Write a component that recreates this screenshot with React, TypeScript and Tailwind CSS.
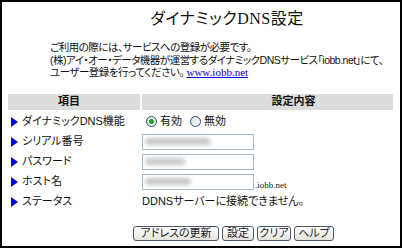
import React from "react";

const jp = "[font-family:'Liberation_Sans','Noto_Sans_CJK_JP',sans-serif] [font-feature-settings:'palt']";

const Arrow = () => (
  <svg width="7" height="10" viewBox="0 0 7 10" className="shrink-0">
    <path d="M0 0 L7 5 L0 10 Z" fill="#0000e0" />
  </svg>
);

const Radio = ({ checked }: { checked?: boolean }) => (
  <span className="relative inline-flex h-[11px] w-[11px] items-center justify-center rounded-full border border-[#1c5180] bg-gradient-to-br from-[#dcdcd7] to-white">
    {checked && <span className="h-[5px] w-[5px] rounded-full bg-[#21a121]" />}
  </span>
);

const Field = ({ blurWidth }: { blurWidth: number }) => (
  <div className="flex h-[16px] w-[112px] items-center border border-[#a5b8cc] bg-white px-[2px]">
    <span className="h-[7px] rounded-sm bg-[#c8c8c8] blur-[2px]" style={{ width: blurWidth }} />
  </div>
);

const Btn = ({ label, w }: { label: string; w: string }) => (
  <button
    className={`${w} flex h-[15px] items-center justify-center rounded-[3px] border border-[#4a5a6c] bg-gradient-to-b from-white to-[#e4e3dc] text-[11px] leading-none text-[#222]`}
  >
    {label}
  </button>
);

const rows = [
  { label: "ダイナミックDNS機能", kind: "radio" },
  { label: "シリアル番号", kind: "field", blur: 66 },
  { label: "パスワード", kind: "field", blur: 40 },
  { label: "ホスト名", kind: "host", blur: 46 },
  { label: "ステータス", kind: "status" },
];

const App = () => {
  return (
    <div className={`h-[248px] w-[402px] overflow-hidden border-2 border-black bg-white text-[#111] ${jp}`}>
      <div className="flex justify-center pl-[52px] pt-[6px]">
        <h1 className="text-[16px] leading-[22px] tracking-[0.5px] [font-family:'Liberation_Serif','Noto_Sans_CJK_JP',serif]">
          ダイナミックDNS設定
        </h1>
      </div>

      <div className="mt-[11px] whitespace-nowrap pl-[48px] text-[10.5px] leading-[12.5px] tracking-[-0.5px]">
        <p>ご利用の際には、サービスへの登録が必要です。</p>
        <p>(株)アイ・オー・データ機器が運営するダイナミックDNSサービス「iobb.net」にて、</p>
        <p>
          ユーザー登録を行ってください。{" "}
          <a href="#" className="text-[11px] tracking-normal text-[#0000ee] underline [font-family:'Liberation_Serif',serif]">
            www.iobb.net
          </a>
        </p>
      </div>

      <div className="mx-[6px] mt-[15px] w-[385px] text-[11px]">
        <div className="flex h-[16px] gap-[2px] font-bold">
          <div className="flex w-[132px] items-center justify-center bg-[#dcdcdc] pr-[10px]">項目</div>
          <div className="flex flex-1 items-center justify-center bg-[#dcdcdc] pl-[52px]">設定内容</div>
        </div>

        <div className="mt-[2px] flex flex-col">
          {rows.map((r) => (
            <div key={r.label} className="flex h-[20px] items-center">
              <div className="flex w-[134px] items-center gap-[4px] pl-[3px]">
                <Arrow />
                <span>{r.label}</span>
              </div>
              <div className="flex flex-1 items-center">
                {r.kind === "radio" && (
                  <div className="flex items-center gap-[3px] pl-[4px]">
                    <Radio checked />
                    <span>有効</span>
                    <span className="ml-[2px]" />
                    <Radio />
                    <span>無効</span>
                  </div>
                )}
                {r.kind === "field" && <Field blurWidth={r.blur!} />}
                {r.kind === "host" && (
                  <div className="flex items-end">
                    <Field blurWidth={r.blur!} />
                    <span className="ml-[1px] text-[9px] leading-[10px] [font-family:'Liberation_Serif',serif]">.iobb.net</span>
                  </div>
                )}
                {r.kind === "status" && <span>DDNSサーバーに接続できません。</span>}
              </div>
            </div>
          ))}
        </div>
      </div>

      <div className="mt-[14px] flex gap-[3px] pl-[131px]">
        <Btn label="アドレスの更新" w="w-[86px]" />
        <Btn label="設定" w="w-[32px]" />
        <Btn label="クリア" w="w-[34px]" />
        <Btn label="ヘルプ" w="w-[40px]" />
      </div>
    </div>
  );
};

export default App;
